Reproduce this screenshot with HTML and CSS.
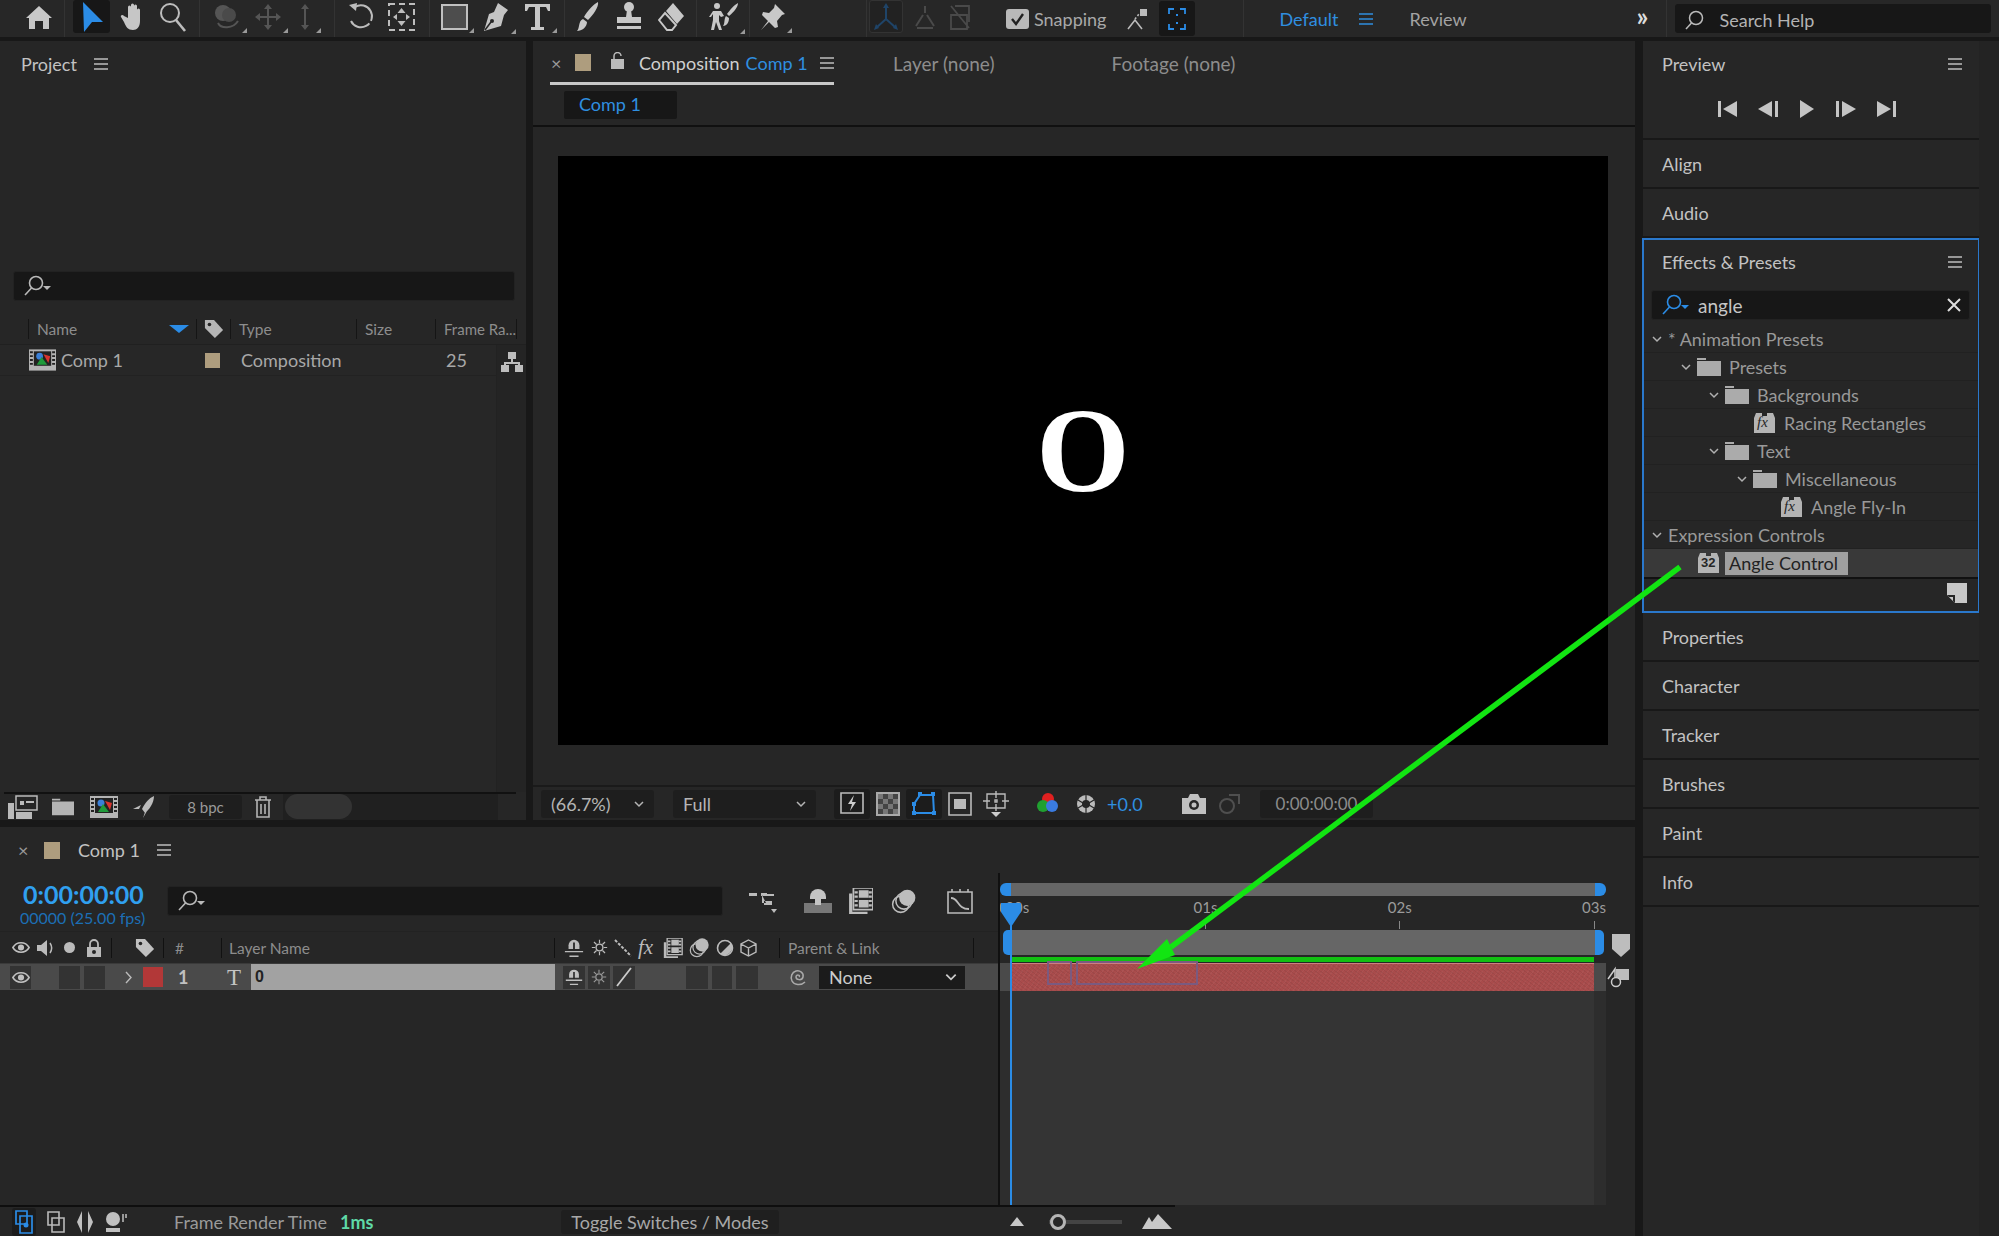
FILE: index.html
```html
<!DOCTYPE html>
<html lang="en">
<head>
<meta charset="utf-8">
<title>After Effects</title>
<link rel="stylesheet" href="styles.css">
</head>
<body>
<svg class="defs" width="0" height="0">
  <symbol id="folder" viewBox="0 0 24 18"><path d="M0 3h24v15H0zM0 0h9v2H0z" fill="currentColor"/></symbol>
  <symbol id="fxfile" viewBox="0 0 21 20"><path d="M0 5 2 0h6v3h5V0h6l2 5v15H0z" fill="currentColor"/></symbol>
  <symbol id="chev" viewBox="0 0 12 12"><path d="M2 4l4 4 4-4" fill="none" stroke="currentColor" stroke-width="1.5"/></symbol>
  <symbol id="burger" viewBox="0 0 14 12"><path d="M0 1h14M0 6h14M0 11h14" stroke="currentColor" stroke-width="1.6"/></symbol>
  <symbol id="search" viewBox="0 0 28 22"><circle cx="13" cy="8" r="6.5" fill="none" stroke="currentColor" stroke-width="1.6"/><path d="M8.5 13 2 20" stroke="currentColor" stroke-width="1.6"/><path d="M20 11h8l-4 4z" fill="currentColor"/></symbol>
  <symbol id="tag" viewBox="0 0 22 22"><path d="M1 1h10l10 11-9 9L1 10z" fill="currentColor"/><circle cx="6" cy="6" r="2" fill="#262626"/></symbol>
  <symbol id="eye" viewBox="0 0 20 14"><path d="M1 7c4-7 14-7 18 0-4 7-14 7-18 0z" fill="none" stroke="currentColor" stroke-width="1.8"/><circle cx="10" cy="7" r="3.4" fill="currentColor"/></symbol>
  <symbol id="shy" viewBox="0 0 22 22"><path d="M5 12V8a6 6 0 0 1 12 0v4z" fill="currentColor"/><path d="M10 5h2v10h-2z" fill="#262626"/><path d="M1 15h20M6 20h10" stroke="currentColor" stroke-width="1.6"/></symbol>
  <symbol id="sun" viewBox="0 0 20 20"><circle cx="10" cy="10" r="4" fill="none" stroke="currentColor" stroke-width="1.6"/><path d="M10 1v4M10 15v4M1 10h4M15 10h4M3.5 3.5l3 3M13.500 13.500l3 3M16.500 3.500l-3 3M6.500 13.500l-3 3" stroke="currentColor" stroke-width="1.4"/></symbol>
  <symbol id="stack" viewBox="0 0 24 24"><circle cx="9" cy="15" r="7.500" fill="none" stroke="currentColor" stroke-width="1.4"/><circle cx="12" cy="12" r="7.500" fill="none" stroke="currentColor" stroke-width="1.4"/><circle cx="15" cy="9" r="7.500" fill="currentColor"/></symbol>
  <symbol id="film" viewBox="0 0 22 24"><path d="M0 5h3v17h14v2H0z" fill="currentColor"/><path d="M4 0h18v20H4z" fill="none" stroke="currentColor" stroke-width="1.600"/><path d="M9 2h9v7H9zM9 11h9v7H9z" fill="currentColor"/><path d="M5 3h3v2H5zM5 7h3v2H5zM5 11h3v2H5zM5 15h3v2H5zM18 3h3v2h-3zM18 7h3v2h-3zM18 11h3v2h-3zM18 15h3v2h-3z" fill="currentColor"/></symbol>
  <symbol id="compicon" viewBox="0 0 28 22"><path d="M0 0h28v22H0z" fill="#b4b4b4"/><path d="M5 2h18v15H5z" fill="#222"/><path d="M1 2h3v2H1zM1 6h3v2H1zM1 10h3v2H1zM1 14h3v2H1zM24 2h3v2h-3zM24 6h3v2h-3zM24 10h3v2h-3zM24 14h3v2h-3z" fill="#222"/><circle cx="11" cy="7" r="3.500" fill="#3a80d8"/><path d="M15 5l7 2-2 7z" fill="#d8342e"/><path d="M13 8l6 8H8z" fill="#1f9a3a"/></symbol>
</svg>

<div class="app">
  <header class="toolbar">
    <div class="tool-group g-home"><svg width="26" height="26" viewBox="0 0 26 26"><path d="M13 2 26 14h-3v11h-6v-8H9v8H3V14H0z" fill="#c8c8c8"/></svg></div>
    <div class="tool-group g-select">
      <span class="tool-on"><svg width="22" height="30" viewBox="0 0 22 30"><path d="M2 0l20 20H11L3 30z" fill="#2b8ce6"/></svg></span>
      <svg width="27" height="30" viewBox="0 0 27 30"><path d="M8 16V5a1.500 1.500 0 0 1 3 0v7-9a1.500 1.500 0 0 1 3 0v9-8a1.500 1.500 0 0 1 3 0v9-5a1.500 1.500 0 0 1 3 0v11c0 6-3 9-7 9-5 0-7-3-9-8l-3-5c-1-2 2-3 3-1z" fill="#c6c6c6"/></svg>
      <svg class="mag" width="28" height="30" viewBox="0 0 28 30"><circle cx="11" cy="11" r="9" fill="none" stroke="#bdbdbd" stroke-width="2"/><path d="M17 18l9 11" stroke="#bdbdbd" stroke-width="2.600"/></svg>
    </div>
    <div class="tool-group g-cam dim">
      <span class="cn"><svg width="28" height="28" viewBox="0 0 28 28"><circle cx="10" cy="10" r="8" fill="#555"/><circle cx="16" cy="12" r="7" fill="#4a4a4a"/><path d="M5 20c3 6 15 6 20-2" fill="none" stroke="#555" stroke-width="2"/></svg></span>
      <span class="cn"><svg width="28" height="28" viewBox="0 0 28 28"><path d="M14 1l4 5h-3v7h7v-3l5 4-5 4v-3h-7v7h3l-4 5-4-5h3v-7H6v3l-5-4 5-4v3h7V6h-3z" fill="#555"/></svg></span>
      <span class="cn"><svg width="20" height="28" viewBox="0 0 20 28"><path d="M10 1l4 5h-3v16h3l-4 5-4-5h3V6H6z" fill="#555"/></svg></span>
    </div>
    <div class="tool-group g-rot">
      <svg width="27" height="30" viewBox="0 0 27 30"><path d="M8 5a11 11 0 1 1-4 14" fill="none" stroke="#bdbdbd" stroke-width="2" stroke-dasharray="26 0 2 3"/><path d="M2 3l8-2-1 8z" fill="#bdbdbd"/></svg>
      <svg width="27" height="28" viewBox="0 0 27 28"><rect x="1" y="1" width="25" height="26" fill="none" stroke="#bdbdbd" stroke-width="2" stroke-dasharray="6 4"/><path d="M13.500 5l4 5h-8zM13.500 23l-4-5h8zM5 14l4-3v6zM22 14l-4-3v6z" fill="#bdbdbd"/></svg>
    </div>
    <div class="tool-group g-shape">
      <span class="cn"><svg width="27" height="28" viewBox="0 0 27 28"><rect x="1" y="2" width="25" height="24" fill="#4d4d4d" stroke="#c0c0c0" stroke-width="2"/></svg></span>
      <span class="cn"><svg width="28" height="30" viewBox="0 0 28 30"><path d="M16 1l10 7-4 5-3 11L2 29l5-17 5-2z" fill="#c4c4c4"/><path d="M3 28l6-8" stroke="#262626" stroke-width="1.500"/><circle cx="10" cy="19" r="2" fill="#262626"/></svg></span>
      <span class="cn"><svg width="27" height="28" viewBox="0 0 27 28"><path d="M1 1h25v7h-2l-2-4h-6v20h4v3H7v-3h4V4H5L3 8H1z" fill="#c8c8c8"/></svg></span>
    </div>
    <div class="tool-group g-paint">
      <svg width="25" height="30" viewBox="0 0 25 30"><path d="M23 0c1 5-5 13-10 18l-4-3C12 9 19 2 23 0zM8 17l4 3c0 5-5 9-10 9 3-3 1-10 6-12z" fill="#c8c8c8"/></svg>
      <svg width="26" height="30" viewBox="0 0 26 30"><circle cx="13" cy="5" r="5" fill="#c8c8c8"/><path d="M11 8h4l1 7h9v6H1v-6h9zM1 24h24v3H1z" fill="#c8c8c8"/></svg>
      <svg width="27" height="30" viewBox="0 0 27 30"><path d="M15 1l11 13-7 8L8 9z" fill="#c8c8c8"/><path d="M7 11l11 12-4 5H9L1 18z" fill="none" stroke="#c8c8c8" stroke-width="2"/></svg>
    </div>
    <div class="tool-group g-roto">
      <span class="cn"><svg width="30" height="30" viewBox="0 0 30 30"><circle cx="8" cy="4" r="3" fill="#c8c8c8"/><path d="M4 9h8l3 5-3 1-2-2v6l3 9h-3l-3-8-2 8H2l2-10v-6L2 15H0z" fill="#c8c8c8"/><path d="M29 1c0 4-4 9-9 13l-2-2c3-4 7-9 11-11zM17 14l3 2c0 4-2 8-6 8 2-2 1-8 3-10z" fill="#c8c8c8"/></svg></span>
    </div>
    <div class="tool-group g-pin">
      <span class="cn"><svg width="26" height="28" viewBox="0 0 26 28"><path d="M15 1l10 10-3 1-5 6 1 6-3 1-6-6-8 8 7-9-6-6 1-3 6 1 5-5z" fill="#c8c8c8"/></svg></span>
    </div>
    <div class="tool-group g-axis">
      <span class="tool-dark"><svg width="26" height="28" viewBox="0 0 26 28"><path d="M13 2v14M13 16 3 25M13 16l10 9" stroke="#1f4468" stroke-width="2" fill="none"/><path d="M13 0l3 5h-6zM1 27l2-6 3 4zM25 27l-2-6-3 4z" fill="#1f4468"/></svg></span>
      <svg width="24" height="28" viewBox="0 0 24 28"><path d="M12 3v7M10 12l-7 11M14 12l7 11M4 25h16" stroke="#4a4a4a" stroke-width="2"/></svg>
      <svg width="26" height="28" viewBox="0 0 26 28"><path d="M4 3l18 22M4 12h16v14H4zM8 3h14v16" stroke="#4a4a4a" stroke-width="1.800" fill="none"/></svg>
    </div>
    <label class="snap"><span class="check"><svg width="15" height="14" viewBox="0 0 15 14"><path d="M2 7l4 5 7-10" stroke="#222" stroke-width="2.400" fill="none"/></svg></span>Snapping</label>
    <svg class="snap-ic" width="22" height="22" viewBox="0 0 22 22"><path d="M2 21l7-9 7 9" stroke="#bbb" stroke-width="1.600" fill="none"/><path d="M9 11l4-5" stroke="#bbb" stroke-width="1.600" stroke-dasharray="2 2"/><path d="M14 1h7v7h-7z" fill="#bbb"/></svg>
    <span class="snap-on"><svg width="18" height="22" viewBox="0 0 18 22"><path d="M1 6V1h5M12 1h5v5M1 16v5h5M12 21h5v-5" fill="none" stroke="#2b8ce6" stroke-width="1.800"/><path d="M9 6v2M9 14v2M6 11h0M12 11h0" stroke="#2b8ce6" stroke-width="2"/></svg></span>
    <nav class="workspaces">
      <span class="ws-active">Default</span>
      <svg class="ws-burger" width="14" height="12"><use href="#burger"/></svg>
      <span class="ws">Review</span>
      <span class="ws-more">»</span>
    </nav>
    <div class="help"><svg width="20" height="20" viewBox="0 0 20 20"><circle cx="12" cy="8" r="6.500" fill="none" stroke="#bbb" stroke-width="1.500"/><path d="M7.500 13 2 19" stroke="#bbb" stroke-width="1.500"/></svg><span>Search Help</span></div>
  </header>

  <div class="main">
    <div class="left">
      <div class="top">
        <section class="project">
          <div class="panel-title"><span class="title">Project</span><svg class="burger" width="14" height="12"><use href="#burger"/></svg></div>
          <div class="thumb-space"></div>
          <div class="searchbox project-search"><svg width="28" height="22"><use href="#search"/></svg></div>
          <div class="proj-head">
            <span class="ph ph-name">Name<svg class="sort" width="20" height="8" viewBox="0 0 20 8"><path d="M0 0h20L10 8z" fill="#2b8ce6"/></svg></span>
            <span class="ph ph-tag"><svg width="20" height="20"><use href="#tag"/></svg></span>
            <span class="ph ph-type">Type</span>
            <span class="ph ph-size">Size</span>
            <span class="ph ph-rate">Frame Ra...</span>
          </div>
          <div class="proj-list">
            <div class="proj-main">
              <div class="proj-row">
                <svg class="c-icon" width="27" height="22"><use href="#compicon"/></svg>
                <span class="c-name">Comp 1</span>
                <span class="c-chip"></span>
                <span class="c-type">Composition</span>
                <span class="c-rate">25</span>
              </div>
            </div>
            <div class="proj-side"><svg width="22" height="20" viewBox="0 0 22 20"><path d="M7 0h8v7h-3v3h7v3h3v7h-8v-7h3v-1H5v1h3v7H0v-7h3v-3h7V7H7z" fill="#bdbdbd"/></svg></div>
          </div>
          <div class="proj-foot">
            <svg width="30" height="24" viewBox="0 0 30 24"><path d="M8 1h21v14H8z" fill="none" stroke="#bbb" stroke-width="1.500"/><path d="M12 6h4v4h-4zM18 6h8v2h-8z" fill="#bbb"/><path d="M0 8h6v16H0zM8 17h16v7H8z" fill="#bbb"/></svg>
            <svg class="ff" width="22" height="20"><use href="#folder"/></svg>
            <svg class="fc" width="28" height="22"><use href="#compicon"/></svg>
            <svg class="fr" width="22" height="22" viewBox="0 0 22 22"><path d="M21 0c0 7-5 14-9 17l-3-4c3-6 7-11 12-13zM8 9l-8 4 6 0zM14 15l-4 7 2-6z" fill="#bbb"/></svg>
            <span class="bpc">8 bpc</span>
            <svg class="trash" width="18" height="22" viewBox="0 0 18 22"><path d="M1 4h16M6 4V1h6v3M3 4v17h12V4M7 8v10M11 8v10" fill="none" stroke="#b5b5b5" stroke-width="1.600"/></svg>
            <div class="scroll"><span class="scroll-thumb"></span></div>
          </div>
        </section>

        <section class="viewer">
          <div class="view-tabs">
            <div class="tab-active">
              <span class="x">×</span><span class="chip"></span>
              <svg class="lock" width="13" height="17" viewBox="0 0 13 17"><path d="M3 8V4a3.500 3.500 0 0 1 7 0" fill="none" stroke="#bbb" stroke-width="1.500"/><path d="M0 7h13v10H0z" fill="#bbb"/></svg>
              <span class="tab-name">Composition</span><span class="tab-comp">Comp 1</span>
              <svg class="burger" width="14" height="12"><use href="#burger"/></svg>
            </div>
            <span class="tab-other t-layer">Layer (none)</span>
            <span class="tab-other t-foot">Footage (none)</span>
          </div>
          <div class="flow"><span class="flow-tab">Comp 1</span></div>
          <div class="stage"><div class="frame"><span class="frame-o">O</span></div></div>
          <div class="view-foot">
            <span class="sel s-zoom">(66.7%)<svg width="12" height="12"><use href="#chev"/></svg></span>
            <span class="sel s-full">Full<svg width="12" height="12"><use href="#chev"/></svg></span>
            <span class="vi vi-dark"><svg width="24" height="24" viewBox="0 0 24 24"><path d="M1 1h22v20H1z" fill="none" stroke="#bbb" stroke-width="1.600"/><path d="M14 3l-6 9h4l-2 7 6-9h-4z" fill="#ccc"/></svg></span>
            <span class="vi"><svg width="24" height="24" viewBox="0 0 24 24"><path d="M0 0h24v24H0z" fill="#aaa"/><path d="M2 2h20v20H2z" fill="#444"/><path d="M2 2h5v5H2zM12 2h5v5h-5zM7 7h5v5H7zM17 7h5v5h-5zM2 12h5v5H2zM12 12h5v5h-5zM7 17h5v5H7zM17 17h5v5h-5z" fill="#777"/></svg></span>
            <span class="vi vi-dark"><svg width="26" height="26" viewBox="0 0 26 26"><path d="M9 4h13l1 18H3V13z" fill="none" stroke="#2b8ce6" stroke-width="2"/><path d="M7 1h4v4H7zM20 1h4v4h-4zM1 11h4v4H1zM1 20h4v4H1zM21 20h4v4h-4z" fill="#2b8ce6"/></svg></span>
            <span class="vi"><svg width="24" height="24" viewBox="0 0 24 24"><path d="M1 1h22v22H1z" fill="none" stroke="#bbb" stroke-width="1.600"/><path d="M6 7h12v10H6z" fill="#bbb"/></svg></span>
            <span class="vi"><svg width="26" height="26" viewBox="0 0 26 26"><path d="M4 3h18v14H4z" fill="none" stroke="#bbb" stroke-width="1.400"/><path d="M13 0v7M13 13v7M0 10h7M19 10h7M12 9h2v2h-2z" stroke="#bbb" stroke-width="1.400"/><path d="M8 21h10l-5 5z" fill="#ccc"/></svg></span>
            <svg class="wheel" width="22" height="24" viewBox="0 0 22 24"><circle cx="11" cy="7" r="6" fill="#e02020"/><circle cx="6" cy="14" r="6" fill="#20a030"/><circle cx="15" cy="14" r="6" fill="#3a7be0"/></svg>
            <svg class="aper" width="20" height="22" viewBox="0 0 20 22"><circle cx="10" cy="11" r="9" fill="#bbb"/><circle cx="10" cy="11" r="4" fill="#262626"/><path d="M10 2v6M18 7l-5 3M18 15l-5-3M10 20v-6M2 15l5-3M2 7l5 3" stroke="#262626" stroke-width="1.200"/></svg>
            <span class="exposure">+0.0</span>
            <svg class="cam" width="24" height="20" viewBox="0 0 24 20"><path d="M0 4h6l2-4h8l2 4h6v16H0z" fill="#c0c0c0"/><circle cx="12" cy="11" r="5" fill="#262626"/><circle cx="12" cy="11" r="2.500" fill="#c0c0c0"/></svg>
            <svg class="cam2" width="24" height="22" viewBox="0 0 24 22"><circle cx="10" cy="13" r="7" fill="none" stroke="#4f4f4f" stroke-width="2"/><path d="M12 2h10v9" fill="none" stroke="#4f4f4f" stroke-width="2"/></svg>
            <span class="tc-box">0:00:00:00</span>
          </div>
        </section>
      </div>

      <section class="timeline">
        <div class="tl-tab">
          <span class="x">×</span><span class="chip"></span><span class="tl-name">Comp 1</span>
          <svg class="burger" width="14" height="12"><use href="#burger"/></svg>
        </div>
        <div class="tl-body">
          <div class="tl-left">
            <div class="tl-controls">
              <div class="timecode"><span class="tc">0:00:00:00</span><span class="fps">00000 (25.00 fps)</span></div>
              <div class="searchbox tl-search"><svg width="28" height="22"><use href="#search"/></svg></div>
              <div class="tl-tools">
                <svg width="28" height="24" viewBox="0 0 28 24"><path d="M0 4h8v3H0zM12 4h6v3h-6zM15 12h8v4h-8zM16 5h9v2h-9zM13 6v8h4" fill="#bbb"/><path d="M22 20h6l-3 4z" fill="#bbb"/></svg>
                <svg class="tt2" width="28" height="26" viewBox="0 0 28 26"><path d="M6 11V9a8 8 0 0 1 16 0v2z" fill="#c4c4c4"/><path d="M0 15h28v10H0z" fill="#777"/><path d="M11 3h6v14h-6z" fill="#c4c4c4"/></svg>
                <svg class="tt3" width="24" height="26"><use href="#film"/></svg>
                <svg class="tt4" width="26" height="26"><use href="#stack"/></svg>
                <svg class="tt5" width="26" height="26" viewBox="0 0 26 26"><path d="M1 4h24v21H1z" fill="none" stroke="#bbb" stroke-width="1.600"/><path d="M5 1v3M13 1v3M21 1v3" stroke="#bbb" stroke-width="1.600"/><path d="M4 10c8 0 6 11 18 11" fill="none" stroke="#bbb" stroke-width="1.800"/></svg>
              </div>
            </div>
            <div class="tl-head">
              <svg class="h-eye" width="18" height="13"><use href="#eye"/></svg>
              <svg class="h-aud" width="20" height="18" viewBox="0 0 20 18"><path d="M1 6h4l6-5v16l-6-5H1z" fill="#bbb"/><path d="M14 4c2 3 2 7 0 10" stroke="#bbb" stroke-width="1.500" fill="none"/></svg>
              <span class="h-solo"></span>
              <svg class="h-lock" width="16" height="18" viewBox="0 0 16 18"><path d="M4 8V5a4 4 0 0 1 8 0v3" fill="none" stroke="#bbb" stroke-width="1.800"/><path d="M1 8h14v10H1z" fill="#bbb"/><circle cx="8" cy="13" r="2" fill="#262626"/></svg>
              <i class="vsep sep-a"></i>
              <svg class="h-tag" width="20" height="20"><use href="#tag"/></svg>
              <i class="vsep sep-b"></i>
              <span class="h-num">#</span>
              <i class="vsep sep-c"></i>
              <span class="h-name">Layer Name</span>
              <i class="vsep sep-d"></i>
              <div class="h-sw">
                <svg width="22" height="20"><use href="#shy"/></svg>
                <svg width="17" height="17"><use href="#sun"/></svg>
                <svg width="18" height="18" viewBox="0 0 18 18"><path d="M1 1l16 16" stroke="#bbb" stroke-width="2" stroke-dasharray="3 1.500"/></svg>
                <span class="fx">fx</span>
                <svg width="20" height="20"><use href="#film"/></svg>
                <svg width="21" height="21"><use href="#stack"/></svg>
                <svg width="18" height="18" viewBox="0 0 18 18"><circle cx="9" cy="9" r="7.500" fill="none" stroke="#bbb" stroke-width="1.600"/><path d="M15 4A8 8 0 0 1 4 15z" fill="#bbb"/></svg>
                <svg width="17" height="18" viewBox="0 0 17 18"><path d="M8.500 1 16 5v8l-7.500 4L1 13V5zM1 5l7.500 4L16 5M8.500 9v8" fill="none" stroke="#bbb" stroke-width="1.400"/></svg>
              </div>
              <i class="vsep sep-e"></i>
              <span class="h-parent">Parent &amp; Link</span>
              <i class="vsep sep-f"></i>
            </div>
            <div class="layer-row">
              <span class="cell c-eye"><svg width="18" height="13"><use href="#eye"/></svg></span>
              <span class="cell c-a"></span>
              <span class="cell c-b"></span>
              <svg class="twirl" width="8" height="13" viewBox="0 0 8 13"><path d="M1 1l5 5.500L1 12" fill="none" stroke="#bbb" stroke-width="1.400"/></svg>
              <span class="red"></span>
              <span class="num">1</span>
              <span class="t-icon">T</span>
              <span class="lname">0</span>
              <span class="cell s-1"><svg width="20" height="18"><use href="#shy"/></svg></span>
              <span class="cell s-2"><svg width="16" height="16"><use href="#sun"/></svg></span>
              <span class="cell s-3"><svg width="16" height="20" viewBox="0 0 16 20"><path d="M1 19 15 1" stroke="#ccc" stroke-width="1.800"/></svg></span>
              <span class="cell s-4"></span>
              <span class="cell s-5"></span>
              <span class="cell s-6"></span>
              <svg class="spiral" width="20" height="20" viewBox="0 0 20 20"><path d="M10 10c2-2-3-3-3 0s6 4 7 0-3-7-7-6-6 6-4 10 9 5 13 1" fill="none" stroke="#aaa" stroke-width="1.500"/></svg>
              <span class="parent-sel">None<svg width="14" height="14"><use href="#chev"/></svg></span>
            </div>
          </div>
          <div class="tl-right">
            <div class="nav"><i class="cap-l"></i><span class="nav-bar"></span><i class="cap-r"></i></div>
            <div class="ruler">
              <span class="mark">0:00s</span><span class="mark">01s</span><span class="mark">02s</span><span class="mark">03s</span>
            </div>
            <div class="work"><i class="wcap-l"></i><span class="work-bar"></span><i class="wcap-r"></i><svg class="marker" width="18" height="23" viewBox="0 0 18 23"><path d="M0 0h18v15l-9 8-9-8z" fill="#bdbdbd"/></svg></div>
            <div class="green"></div>
            <div class="track-row">
              <div class="bar"><i class="mp mp-a"></i><i class="mp mp-b"></i></div>
              <svg class="lock-ic" width="24" height="22" viewBox="0 0 24 22"><path d="M2 13 9 3v9" fill="none" stroke="#ccc" stroke-width="1.500"/><path d="M10 3h13v11H10z" fill="#bdbdbd"/><circle cx="10" cy="16" r="4.500" fill="#262626" stroke="#ccc" stroke-width="1.500"/></svg>
            </div>
            <div class="track-rest"><div class="track-fill"></div></div>
            <div class="playhead"><svg width="22" height="24" viewBox="0 0 22 24"><path d="M1 0h20v9L11 24 1 9z" fill="#2b8ce6"/></svg></div>
          </div>
        </div>
        <div class="tl-foot">
          <span class="foot-on"><svg width="18" height="24" viewBox="0 0 18 24"><path d="M1 1h11v13H1zM5 6h12v17H5z" fill="none" stroke="#2b8ce6" stroke-width="1.700"/><circle cx="11" cy="15" r="2.500" fill="#2b8ce6"/></svg></span>
          <svg class="fi" width="18" height="22" viewBox="0 0 18 22"><path d="M1 1h11v13H1zM5 7h12v14H5z" fill="none" stroke="#bbb" stroke-width="1.600"/></svg>
          <svg class="fi" width="18" height="22" viewBox="0 0 18 22"><path d="M6 0 1 11l5 11zM12 0l5 11-5 11z" fill="#c0c0c0"/></svg>
          <svg class="fi" width="22" height="22" viewBox="0 0 22 22"><circle cx="8" cy="8" r="7" fill="#c0c0c0"/><path d="M1 17h14v4H1z" fill="#c0c0c0"/><path d="M18 3v8M21 3v4" stroke="#c0c0c0" stroke-width="1.500"/></svg>
          <span class="frt">Frame Render Time</span><span class="ms">1ms</span>
          <span class="toggle">Toggle Switches / Modes</span>
          <svg class="z1" width="14" height="9" viewBox="0 0 14 9"><path d="M0 9 7 0l7 9z" fill="#c8c8c8"/></svg>
          <span class="slider"><i class="knob"></i></span>
          <svg class="z2" width="30" height="15" viewBox="0 0 30 15"><path d="M0 15 7 3l3 5 6-8 14 15z" fill="#c8c8c8"/></svg>
        </div>
      </section>
    </div>

    <aside class="right">
      <section class="panel preview">
        <div class="panel-title pr"><span class="title">Preview</span><svg class="burger" width="14" height="12"><use href="#burger"/></svg></div>
        <div class="controls">
          <svg width="20" height="18" viewBox="0 0 20 18"><path d="M0 1h3v16H0zM19 1v16L5 9z" fill="#c4c4c4"/></svg>
          <svg width="21" height="18" viewBox="0 0 21 18"><path d="M14 1v16L0 9zM17 1h3v16h-3z" fill="#c4c4c4"/></svg>
          <svg width="16" height="18" viewBox="0 0 16 18"><path d="M1 0v18l14-9z" fill="#c4c4c4"/></svg>
          <svg width="21" height="18" viewBox="0 0 21 18"><path d="M1 1h3v16H1zM7 1v16l14-8z" fill="#c4c4c4"/></svg>
          <svg width="20" height="18" viewBox="0 0 20 18"><path d="M1 1v16l14-8zM17 1h3v16h-3z" fill="#c4c4c4"/></svg>
        </div>
      </section>
      <section class="panel collapsed"><span class="title">Align</span></section>
      <section class="panel collapsed"><span class="title">Audio</span></section>
      <section class="panel effects">
        <div class="panel-title pr"><span class="title">Effects &amp; Presets</span><svg class="burger" width="14" height="12"><use href="#burger"/></svg></div>
        <div class="searchbox fx-search"><svg class="s-blue" width="28" height="22"><use href="#search"/></svg><span class="q">angle</span><svg class="clear" width="14" height="14" viewBox="0 0 14 14"><path d="M1 1l12 12M13 1 1 13" stroke="#ddd" stroke-width="2"/></svg></div>
        <div class="tree">
          <div class="row l0"><svg class="tw" width="12" height="12"><use href="#chev"/></svg><span>* Animation Presets</span></div>
          <div class="row l1"><svg class="tw" width="12" height="12"><use href="#chev"/></svg><svg class="fo" width="24" height="18"><use href="#folder"/></svg><span>Presets</span></div>
          <div class="row l2"><svg class="tw" width="12" height="12"><use href="#chev"/></svg><svg class="fo" width="24" height="18"><use href="#folder"/></svg><span>Backgrounds</span></div>
          <div class="row l3 leaf"><span class="fxi"><svg width="21" height="20"><use href="#fxfile"/></svg><em>fx</em></span><span>Racing Rectangles</span></div>
          <div class="row l2"><svg class="tw" width="12" height="12"><use href="#chev"/></svg><svg class="fo" width="24" height="18"><use href="#folder"/></svg><span>Text</span></div>
          <div class="row l3"><svg class="tw" width="12" height="12"><use href="#chev"/></svg><svg class="fo" width="24" height="18"><use href="#folder"/></svg><span>Miscellaneous</span></div>
          <div class="row l4 leaf"><span class="fxi"><svg width="21" height="20"><use href="#fxfile"/></svg><em>fx</em></span><span>Angle Fly-In</span></div>
          <div class="row l0"><svg class="tw" width="12" height="12"><use href="#chev"/></svg><span>Expression Controls</span></div>
          <div class="row selrow"><span class="fxi"><svg width="21" height="20"><use href="#fxfile"/></svg><em class="n32">32</em></span><span class="selname">Angle Control</span></div>
        </div>
        <div class="fx-foot"><svg width="20" height="20" viewBox="0 0 20 20"><path d="M0 0h20v20H8L0 12z" fill="#c8c8c8"/><path d="M0 12h8v8z" fill="#262626"/><path d="M2 14h4v4z" fill="#c8c8c8"/></svg></div>
      </section>
      <section class="panel collapsed"><span class="title">Properties</span></section>
      <section class="panel collapsed"><span class="title">Character</span></section>
      <section class="panel collapsed"><span class="title">Tracker</span></section>
      <section class="panel collapsed"><span class="title">Brushes</span></section>
      <section class="panel collapsed"><span class="title">Paint</span></section>
      <section class="panel collapsed"><span class="title">Info</span></section>
      <div class="right-fill"></div>
    </aside>
    <div class="edge"></div>
  </div>
</div>

<svg class="arrow" width="1999" height="1236" viewBox="0 0 1999 1236">
  <path d="M1680 567 1171 947" stroke="#12e512" stroke-width="5.500" fill="none"/>
  <path d="M1137 969 1167 939 1175 955z" fill="#12e512"/>
</svg>
</body>
</html>
```

FILE: styles.css
```css
* { box-sizing: border-box; }
html, body { margin: 0; padding: 0; }
body {
  width: 1999px; height: 1236px; overflow: hidden; position: relative;
  background: #181818; color: #a8a8a8;
  font-family: Lato, "Open Sans", "Liberation Sans", sans-serif; font-size: 18px;
}
.defs { position: absolute; }
.app { display: flex; flex-direction: column; height: 1236px; }
svg { display: block; flex: none; }
use { color: inherit; }

/* toolbar */
.toolbar { height: 37px; margin-bottom: 4px; background: #272727; display: flex; align-items: center; flex: none; }
.tool-group { display: flex; align-items: center; height: 37px; padding-bottom: 4px; border-right: 1px solid #333; flex: none; }
.g-home { width: 65px; padding-left: 26px; }
.g-select { width: 135px; padding-left: 8px; gap: 10px; }
.mag { margin-left: 2px; }
.tool-on { width: 37px; height: 33px; background: #171717; border-radius: 3px; display: flex; align-items: center; justify-content: center; }
.g-cam { width: 135px; padding-left: 13px; gap: 13px; }
.g-rot { width: 95px; padding-left: 12px; gap: 14px; }
.g-shape { width: 135px; padding-left: 11px; gap: 14px; }
.g-paint { width: 132px; padding-left: 10px; gap: 16px; }
.g-roto { width: 53px; padding-left: 12px; }
.g-pin { width: 117px; padding-left: 10px; }
.g-axis { width: 138px; padding-left: 2px; gap: 10px; border-right: 0; }
.cn { position: relative; display: block; flex: none; }
.cn::after { content: ""; position: absolute; right: -6px; bottom: -2px; border-left: 5px solid transparent; border-bottom: 5px solid #9a9a9a; }
.tool-dark { width: 34px; height: 33px; border: 1px solid #333; border-radius: 3px; background: #222; display: flex; align-items: center; justify-content: center; }
.snap { display: flex; align-items: center; gap: 5px; color: #a9a9a9; margin-left: 1px; }
.check { width: 23px; height: 20px; background: #b9b9b9; border-radius: 3px; display: flex; align-items: center; justify-content: center; }
.snap-ic { margin-left: 20px; }
.snap-on { width: 36px; height: 35px; margin-left: 11px; background: #171717; border-radius: 3px; display: flex; align-items: center; justify-content: center; }
.workspaces { width: 424px; height: 37px; margin-left: 48px; padding-left: 35px; display: flex; align-items: center; border-left: 1px solid #333; border-right: 1px solid #333; }
.ws-active { color: #2f8fe0; width: 80px; }
.ws-burger { color: #2f8fe0; }
.ws { margin-left: 36px; color: #a3a3a3; width: 227px; }
.ws-more { color: #ddd; font-size: 26px; line-height: 26px; margin-top: -6px; font-weight: 700; }
.help { margin-left: 8px; width: 316px; height: 29px; background: #171717; border-radius: 3px; display: flex; align-items: center; gap: 15px; padding: 2px 0 0 9px; color: #b3b3b3; }

/* layout */
.main { flex: 1; display: flex; min-height: 0; }
.left { width: 1635px; display: flex; flex-direction: column; flex: none; }
.top { height: 779px; display: flex; gap: 7px; flex: none; }
.timeline { height: 409px; margin-top: 7px; background: #262626; display: flex; flex-direction: column; flex: none; }

/* panel common */
.panel-title { height: 46px; display: flex; align-items: center; flex: none; padding-left: 21px; }
.title { color: #c2c2c2; }
.burger { color: #bdbdbd; margin-left: 17px; }
.searchbox { background: #171717; border: 1px solid #222; border-radius: 3px; display: flex; align-items: center; color: #b9b9b9; }

/* project */
.project { width: 526px; background: #262626; display: flex; flex-direction: column; flex: none; }
.thumb-space { height: 184px; flex: none; }
.project-search { height: 30px; margin: 0 11px 0 13px; padding-left: 9px; flex: none; }
.proj-head { height: 31px; margin-top: 13px; display: flex; align-items: center; color: #8d8d8d; font-size: 15.500px; flex: none; border-bottom: 1px solid #202020; }
.ph { height: 20px; display: flex; align-items: center; border-left: 1px solid #151515; padding-left: 8px; flex: none; }
.ph-name { margin-left: 28px; width: 168px; justify-content: space-between; padding-right: 7px; }
.ph-tag { width: 34px; padding-left: 7px; color: #b5b5b5; }
.ph-type { width: 126px; }
.ph-size { width: 79px; }
.ph-rate { width: 82px; border-right: 1px solid #151515; font-size: 15px; white-space: nowrap; overflow: hidden; }
.proj-list { flex: 1; display: flex; min-height: 0; }
.proj-main { width: 497px; flex: none; border-right: 1px solid #222; background: #272727; }
.proj-side { flex: 1; display: flex; justify-content: center; padding-top: 7px; background: #242424; }
.proj-row { height: 31px; display: flex; align-items: center; border-bottom: 1px solid #222; }
.c-icon { margin-left: 29px; }
.c-name { margin-left: 5px; width: 144px; color: #a8a8a8; }
.c-chip { width: 15px; height: 15px; background: #ae9d7e; }
.c-type { margin-left: 21px; width: 205px; color: #a8a8a8; }
.proj-foot { height: 28px; border-top: 2px solid #111; display: flex; align-items: center; flex: none; padding-left: 8px; margin: 0 10px 0 4px; }
.proj-foot svg:first-child { margin-left: -4px; }
.ff { margin-left: 14px; color: #b5b5b5; }
.fc { margin-left: 16px; }
.fr { margin-left: 15px; }
.bpc { margin-left: 14px; width: 73px; height: 24px; background: #1e1e1e; border-radius: 3px; color: #9a9a9a; font-size: 15px; display: flex; align-items: center; justify-content: center; }
.trash { margin-left: 12px; }
.scroll { margin-left: 11px; width: 215px; height: 26px; background: #202020; }
.scroll-thumb { display: block; width: 67px; height: 25px; border-radius: 13px; background: #333; margin-left: 2px; }

/* viewer */
.viewer { width: 1102px; background: #262626; display: flex; flex-direction: column; flex: none; }
.view-tabs { height: 44px; display: flex; align-items: flex-start; flex: none; }
.tab-active { margin-left: 17px; width: 284px; height: 44px; padding-top: 2px; border-bottom: 3px solid #c8c8c8; display: flex; align-items: center; }
.x { color: #999; font-size: 18px; width: 25px; padding-left: 1px; }
.chip { width: 16px; height: 17px; background: #ae9d7e; flex: none; }
.lock { margin-left: 20px; margin-top: -4px; }
.tab-name { margin-left: 15px; color: #d0d0d0; }
.tab-comp { margin-left: 6px; color: #2f8fe0; }
.tab-active .burger { margin-left: auto; }
.tab-other { color: #8d8d8d; height: 44px; line-height: 46px; font-size: 19px; }
.t-layer { margin-left: 59px; }
.t-foot { margin-left: 117px; }
.flow { height: 42px; padding: 6px 0 0 31px; border-bottom: 2px solid #101010; flex: none; }
.flow-tab { display: block; width: 113px; height: 28px; background: #171717; border-radius: 2px; color: #2f8fe0; line-height: 27px; padding-left: 15px; }
.stage { height: 658px; padding: 29px 27px 40px 25px; flex: none; }
.frame { width: 1050px; height: 589px; background: #000; display: flex; align-items: center; justify-content: center; }
.frame-o { color: #fff; font-family: "Liberation Serif", serif; font-weight: 700; font-size: 120px; line-height: 1; }
.view-foot { height: 35px; border-top: 2px solid #1a1a1a; display: flex; align-items: center; flex: none; padding-left: 8px; }
.sel { height: 28px; background: #1e1e1e; border-radius: 3px; display: flex; align-items: center; justify-content: space-between; color: #b5b5b5; padding: 0 9px 0 10px; flex: none; }
.s-zoom { width: 113px; }
.s-full { width: 143px; margin-left: 19px; }
.vi { width: 36px; height: 30px; display: flex; align-items: center; justify-content: center; flex: none; }
.vi-dark { background: #1c1c1c; border-radius: 3px; }
.s-full + .vi { margin-left: 18px; }
.wheel { margin-left: 23px; }
.aper { margin-left: 17px; }
.exposure { margin-left: 11px; color: #2f8fe0; width: 35px; white-space: nowrap; }
.cam { margin-left: 40px; }
.cam2 { margin-left: 11px; }
.tc-box { margin-left: 19px; width: 113px; height: 28px; background: #1e1e1e; border-radius: 3px; color: #8c8c8c; font-size: 17px; display: flex; align-items: center; justify-content: center; }

/* timeline */
.tl-tab { height: 46px; display: flex; align-items: center; padding-left: 16px; flex: none; }
.tl-tab .x { width: 28px; padding-left: 2px; }
.tl-name { margin-left: 18px; color: #c2c2c2; }
.tl-tab .burger { margin-left: 17px; }
.tl-body { height: 332px; display: flex; flex: none; position: relative; }
.tl-left { width: 998px; flex: none; display: flex; flex-direction: column; }
.tl-controls { height: 59px; display: flex; align-items: flex-start; flex: none; border-bottom: 1px solid #222; }
.timecode { width: 167px; display: flex; flex-direction: column; align-items: flex-start; padding: 8px 0 0 20px; flex: none; }
.tc { color: #30a0f0; font-size: 25px; font-weight: 700; line-height: 26px; margin-left: 3px; }
.fps { color: #1c6fb5; font-size: 16px; line-height: 21px; white-space: nowrap; }
.tl-search { width: 556px; height: 30px; margin-top: 13px; padding-left: 9px; }
.tl-tools { display: flex; align-items: center; margin: 15px 0 0 26px; color: #bdbdbd; }
.tt2 { margin-left: 27px; }
.tt3 { margin-left: 17px; }
.tt4 { margin-left: 18px; }
.tt5 { margin-left: 30px; }
.tl-head { height: 31px; display: flex; align-items: center; color: #8d8d8d; font-size: 15.500px; flex: none; }
.h-eye { margin-left: 12px; color: #c0c0c0; }
.h-aud { margin-left: 6px; }
.h-solo { width: 11px; height: 11px; background: #bbb; border-radius: 50%; margin-left: 8px; }
.h-lock { margin-left: 11px; }
.vsep { width: 1px; height: 20px; background: #111; flex: none; }
.sep-a { margin-left: 9px; }
.h-tag { margin-left: 23px; color: #c0c0c0; }
.sep-b { margin-left: 8px; }
.h-num { margin-left: 11px; width: 46px; }
.h-name { margin-left: 7px; width: 325px; white-space: nowrap; }
.h-sw { display: flex; align-items: center; gap: 6px; margin-left: 8px; width: 216px; color: #bbb; }
.fx { color: #bbb; font-family: "Liberation Serif", serif; font-style: italic; font-size: 21px; width: 19px; }
.h-parent { margin-left: 8px; width: 185px; white-space: nowrap; }
.layer-row { height: 27px; background: #4a4a4a; display: flex; align-items: center; flex: none; border-top: 1px solid #3a3a3a; }
.cell { height: 23px; background: #333; display: flex; align-items: center; justify-content: center; flex: none; color: #c0c0c0; }
.c-eye { width: 21px; margin-left: 10px; }
.c-a { width: 21px; margin-left: 28px; }
.c-b { width: 21px; margin-left: 4px; }
.twirl { margin-left: 20px; }
.red { width: 20px; height: 20px; background: #b23838; margin-left: 10px; flex: none; }
.num { margin-left: 15px; width: 49px; color: #c0c0c0; font-weight: 700; }
.t-icon { width: 24px; font-family: "Liberation Serif", serif; font-size: 23px; color: #c4c4c4; line-height: 1; }
.lname { height: 26px; width: 304px; background: #a2a2a2; color: #222; font-weight: 700; padding-left: 4px; line-height: 26px; font-family: "Liberation Sans", sans-serif; font-size: 16px; flex: none; }
.s-1 { width: 22px; margin-left: 8px; }
.s-2 { width: 22px; margin-left: 3px; color: #999; }
.s-3 { width: 22px; margin-left: 3px; }
.s-4 { width: 22px; margin-left: 51px; }
.s-5 { width: 20px; margin-left: 4px; }
.s-6 { width: 22px; margin-left: 4px; }
.spiral { margin-left: 31px; }
.parent-sel { margin-left: 10px; width: 146px; height: 23px; background: #1b1b1b; color: #ccc; display: flex; align-items: center; justify-content: space-between; padding: 0 7px 0 10px; flex: none; }
.tl-right { flex: 1; border-left: 2px solid #101010; position: relative; display: flex; flex-direction: column; padding-top: 10px; }
.nav { height: 13px; display: flex; width: 606px; flex: none; }
.cap-l, .cap-r { width: 11px; background: #2b8ce6; }
.cap-l { border-radius: 6px 0 0 6px; }
.cap-r { border-radius: 0 6px 6px 0; }
.nav-bar { flex: 1; background: #666; }
.ruler { height: 34px; display: grid; grid-template-columns: repeat(4, 194.300px); margin-left: -86px; clip-path: inset(0 0 0 86px); flex: none; }
.mark { display: block; text-align: center; color: #9b9b9b; font-size: 15px; line-height: 28px; height: 34px; margin-top: -3px; white-space: nowrap; }
.mark + .mark::after { content: ""; display: block; width: 1px; height: 8px; background: #888; margin: 0 auto; }
.work { height: 25px; display: flex; align-items: stretch; margin-left: 3px; flex: none; }
.wcap-l, .wcap-r { width: 9px; background: #2b8ce6; }
.wcap-l { border-radius: 5px 0 0 5px; }
.wcap-r { border-radius: 0 5px 5px 0; }
.work-bar { width: 583px; background: #666; }
.marker { margin: 4px 0 0 8px; }
.green { height: 5px; width: 582px; margin: 2px 0 0 12px; background: #12c012; flex: none; }
.track-row { height: 28px; margin-top: 1px; width: 606px; background: #4a4a4a; padding-left: 12px; flex: none; display: flex; align-items: stretch; }
.bar {
  width: 582px; border-top: 1px solid #cc8080; display: flex; gap: 4px; padding: 0 0 4px 35px; flex: none;
  background-color: #a94c4c;
  background-image: repeating-linear-gradient(37deg, rgba(0,0,0,.06) 0 1px, transparent 1px 3px), repeating-linear-gradient(-53deg, rgba(255,255,255,.04) 0 1px, transparent 1px 4px);
}
.mp { display: block; border: 2px solid #7a5a80; height: 24px; margin-top: -3px; }
.mp-a { width: 25px; }
.mp-b { width: 122px; }
.lock-ic { margin: 3px 0 0 12px; }
.track-rest { flex: 1; width: 606px; background: #2d2d2d; padding-left: 12px; min-height: 0; }
.track-fill { width: 582px; height: 100%; background: #343434; }
.playhead { position: absolute; left: 0; top: 30px; bottom: 0; width: 22px; }
.playhead::after { content: ""; position: absolute; left: 10px; top: 20px; bottom: 0; width: 1.500px; background: #2b8ce6; }
.tl-foot { flex: 1; border-top: 2px solid #0e0e0e; display: flex; align-items: center; margin-right: 460px; }
.foot-on { width: 24px; height: 28px; margin-left: 12px; background: #1c1c1c; border-radius: 3px; display: flex; align-items: center; justify-content: center; flex: none; }
.fi { margin-left: 11px; color: #bbb; }
.frt { margin-left: 47px; width: 158px; color: #9a9a9a; white-space: nowrap; flex: none; }
.ms { margin-left: 8px; width: 36px; color: #5fd9a7; font-weight: 700; flex: none; }
.toggle { margin-left: 185px; width: 218px; height: 24px; background: #1f1f1f; border-radius: 3px; color: #a8a8a8; display: flex; align-items: center; justify-content: center; white-space: nowrap; flex: none; }
.z1 { margin-left: 231px; }
.slider { width: 73px; height: 4px; margin-left: 25px; background: #444; position: relative; flex: none; }
.knob { position: absolute; left: 1px; top: -6px; width: 16px; height: 16px; border: 3px solid #b5b5b5; border-radius: 50%; background: #262626; }
.z2 { margin-left: 20px; }

/* right column */
.right { width: 336px; margin-left: 8px; display: flex; flex-direction: column; flex: none; gap: 2px; }
.panel { background: #262626; flex: none; }
.right-fill { flex: 1; background: #262626; }
.edge { flex: 1; background: #232323; }
.preview { height: 97px; }
.pr { padding-left: 19px; justify-content: space-between; padding-right: 17px; }
.controls { height: 40px; display: flex; align-items: center; gap: 20px; padding-left: 75px; margin-top: 2px; }
.collapsed { height: 47px; padding-left: 19px; display: flex; align-items: center; }
.effects { height: 373px; outline: 2px solid #2a78cc; outline-offset: -1px; display: flex; flex-direction: column; margin: 1px 0 -1px; }
.fx-search { height: 30px; margin: 5px 9px 0 8px; padding: 0 6px 0 9px; flex: none; }
.q { margin-left: 9px; color: #c6c6c6; font-size: 19px; }
.clear { margin-left: auto; margin-right: 2px; }
.s-blue { color: #2b8ce6; }
.tree { margin-top: 5px; flex: none; }
.row { height: 28px; display: flex; align-items: center; border-bottom: 1px solid #212121; color: #999; white-space: nowrap; }
.tw { color: #b0b0b0; }
.fo { color: #ababab; margin: 0 8px 0 5px; }
.l0 { padding-left: 8px; }
.l0 .tw { margin-right: 5px; }
.l1 { padding-left: 37px; }
.l2 { padding-left: 65px; }
.l3 { padding-left: 93px; }
.l4 { padding-left: 121px; }
.l3.leaf { padding-left: 111px; }
.l4.leaf { padding-left: 138px; }
.fxi { position: relative; width: 21px; height: 20px; margin-right: 9px; color: #b4b4b4; flex: none; }
.fxi em { position: absolute; left: 3px; top: 1px; font-family: "Liberation Serif", serif; font-size: 15px; color: #262626; }
.fxi .n32 { font-style: normal; font-family: "Liberation Sans", sans-serif; font-size: 13px; left: 3px; top: 2px; font-weight: 700; }
.selrow { background: #393939; padding-left: 55px; border: 0; }
.selrow .fxi { margin-right: 6px; }
.selname { background: #a0a0a0; color: #222; height: 23px; line-height: 22px; width: 123px; padding-left: 4px; }
.fx-foot { border-top: 2px solid #111; flex: 1; display: flex; justify-content: flex-end; align-items: center; padding: 0 12px 5px 0; }

.arrow { position: absolute; left: 0; top: 0; pointer-events: none; }
```
